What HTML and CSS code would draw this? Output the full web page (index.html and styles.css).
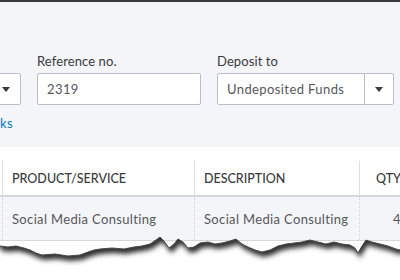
FILE: index.html
```html
<!DOCTYPE html>
<html lang="en">
<head>
    <meta charset="UTF-8">
    <title>Deposit</title>
    <link rel="stylesheet" href="styles.css">
</head>
<body>
    <div class="topbar"></div>
    <div class="form-area">
        <div class="fields">
            <div class="field field-account">
                <label>&nbsp;</label>
                <div class="select">
                    <span class="select-value"></span>
                    <span class="select-arrow"><span class="caret"></span></span>
                </div>
            </div>
            <div class="field field-ref">
                <label>Reference no.</label>
                <div class="input">2319</div>
            </div>
            <div class="field field-deposit">
                <label>Deposit to</label>
                <div class="select">
                    <span class="select-value">Undeposited Funds</span>
                    <span class="select-arrow"><span class="caret"></span></span>
                </div>
            </div>
        </div>
        <div class="links">
            <a href="#" class="link">ks</a>
        </div>
    </div>
    <div class="table-area">
        <table class="lines">
            <colgroup>
                <col class="col-num">
                <col class="col-product">
                <col class="col-desc">
                <col class="col-qty">
            </colgroup>
            <thead>
                <tr>
                    <th></th>
                    <th>PRODUCT/SERVICE</th>
                    <th>DESCRIPTION</th>
                    <th class="num">QTY</th>
                </tr>
            </thead>
            <tbody>
                <tr>
                    <td></td>
                    <td>Social Media Consulting</td>
                    <td>Social Media Consulting</td>
                    <td class="num">4</td>
                </tr>
            </tbody>
        </table>
        <svg class="torn" width="400" height="50" viewBox="0 226 400 50">
            <defs>
                <filter id="blur" x="-10%" y="-50%" width="120%" height="200%">
                    <feGaussianBlur stdDeviation="2.4"/>
                </filter>
                <clipPath id="below">
                    <path d="M0 246 L8 247 L16 246 L24 248 L30 250 L36 253 L42 255 L55 254 L68 256 L80 255 L88 252 L94 250 L100 249 L112 248 L124 249 L134 247 L142 246 L150 244 L156 240 L160 237 L164 241 L169 248 L174 244 L178 239 L183 242 L188 248 L194 247 L200 243 L208 242 L215 244 L222 243 L230 241 L236 239 L242 244 L248 247 L255 250 L262 252 L270 250 L278 246 L286 244 L294 243 L302 242 L310 240 L318 242 L326 244 L334 242 L342 244 L350 245 L355 248 L358 253 L362 246 L366 240 L372 242 L380 244 L388 246 L396 249 L400 250 L400 290 L0 290 Z"/>
                </clipPath>
            </defs>
            <path class="paper-below" d="M0 246 L8 247 L16 246 L24 248 L30 250 L36 253 L42 255 L55 254 L68 256 L80 255 L88 252 L94 250 L100 249 L112 248 L124 249 L134 247 L142 246 L150 244 L156 240 L160 237 L164 241 L169 248 L174 244 L178 239 L183 242 L188 248 L194 247 L200 243 L208 242 L215 244 L222 243 L230 241 L236 239 L242 244 L248 247 L255 250 L262 252 L270 250 L278 246 L286 244 L294 243 L302 242 L310 240 L318 242 L326 244 L334 242 L342 244 L350 245 L355 248 L358 253 L362 246 L366 240 L372 242 L380 244 L388 246 L396 249 L400 250 L400 290 L0 290 Z"/>
            <g clip-path="url(#below)">
                <path class="shadow" filter="url(#blur)" transform="translate(2 5)" d="M-10 230 L0 246 L8 247 L16 246 L24 248 L30 250 L36 253 L42 255 L55 254 L68 256 L80 255 L88 252 L94 250 L100 249 L112 248 L124 249 L134 247 L142 246 L150 244 L156 240 L160 237 L164 241 L169 248 L174 244 L178 239 L183 242 L188 248 L194 247 L200 243 L208 242 L215 244 L222 243 L230 241 L236 239 L242 244 L248 247 L255 250 L262 252 L270 250 L278 246 L286 244 L294 243 L302 242 L310 240 L318 242 L326 244 L334 242 L342 244 L350 245 L355 248 L358 253 L362 246 L366 240 L372 242 L380 244 L388 246 L396 249 L410 250 L410 226 Z"/>
            </g>
            <path class="edge" d="M0 246 L8 247 L16 246 L24 248 L30 250 L36 253 L42 255 L55 254 L68 256 L80 255 L88 252 L94 250 L100 249 L112 248 L124 249 L134 247 L142 246 L150 244 L156 240 L160 237 L164 241 L169 248 L174 244 L178 239 L183 242 L188 248 L194 247 L200 243 L208 242 L215 244 L222 243 L230 241 L236 239 L242 244 L248 247 L255 250 L262 252 L270 250 L278 246 L286 244 L294 243 L302 242 L310 240 L318 242 L326 244 L334 242 L342 244 L350 245 L355 248 L358 253 L362 246 L366 240 L372 242 L380 244 L388 246 L396 249 L400 250"/>
        </svg>
    </div>
</body>
</html>
```

FILE: styles.css
```css
body {
    margin: 0;
    padding: 0;
    background-color: #ffffff;
    font-family: Lato, "Liberation Sans", sans-serif;
    color: #393a3d;
    overflow: hidden;
}
.topbar {
    height: 2px;
    background-color: #3b3c3f;
}
.form-area {
    background-color: #f4f5f8;
    height: 145px;
    overflow: hidden;
}
.fields {
    display: flex;
    gap: 16px;
    padding-top: 51px;
    margin-left: -140px;
}
.field label {
    display: block;
    font-size: 13px;
    line-height: 16px;
    margin-bottom: 4px;
    letter-spacing: 0.1px;
}
.field-account {
    width: 161px;
}
.field-ref {
    width: 164px;
}
.field-deposit {
    width: 177px;
}
.input, .select {
    box-sizing: border-box;
    height: 32px;
    background-color: #ffffff;
    border: 1px solid #babec5;
    border-radius: 2px;
    font-size: 13px;
    line-height: 30px;
    color: #55575b;
    letter-spacing: 0.4px;
}
.input {
    padding: 0 9px;
}
.select {
    display: flex;
}
.select-value {
    flex: 1;
    padding: 0 9px;
    white-space: nowrap;
    overflow: hidden;
}
.select-arrow {
    width: 28px;
    border-left: 1px solid #babec5;
    display: flex;
    align-items: center;
    justify-content: center;
}
.caret {
    width: 0;
    height: 0;
    border-left: 4px solid transparent;
    border-right: 4px solid transparent;
    border-top: 5px solid #393a3d;
}
.links {
    margin-top: 10px;
    font-size: 13px;
    letter-spacing: 0.3px;
}
.link {
    color: #0077c5;
    text-decoration: none;
}
.table-area {
    position: relative;
    background-color: #ffffff;
    padding-top: 14px;
    height: 119px;
}
.lines {
    border-collapse: collapse;
    margin-left: -28px;
    width: 428px;
    table-layout: fixed;
    font-size: 13px;
}
.col-num {
    width: 30px;
}
.col-product {
    width: 192px;
}
.col-desc {
    width: 165px;
}
.col-qty {
    width: 41px;
}
.lines th {
    height: 34px;
    text-align: left;
    font-weight: 500;
    font-size: 12.5px;
    padding: 0 9px;
    border-left: 1px solid #dcdee2;
    border-bottom: 2px solid #d4d7dc;
    white-space: nowrap;
    overflow: hidden;
}
.lines td {
    height: 43px;
    background-color: #f4f5f8;
    color: #55575b;
    padding: 0 9px;
    letter-spacing: 0.35px;
    border-left: 1px dotted #c4c7cc;
    border-bottom: 1px solid #d4d7dc;
    white-space: nowrap;
    overflow: hidden;
}
.lines th.num {
    padding-left: 16px;
}
.lines td.num {
    padding-left: 33px;
}
.torn {
    position: absolute;
    left: 0;
    top: 79px;
}
.paper-below {
    fill: #ffffff;
}
.shadow {
    fill: #2e2e2e;
}
.edge {
    fill: none;
    stroke: #4a4a4a;
    stroke-width: 1;
}
```
